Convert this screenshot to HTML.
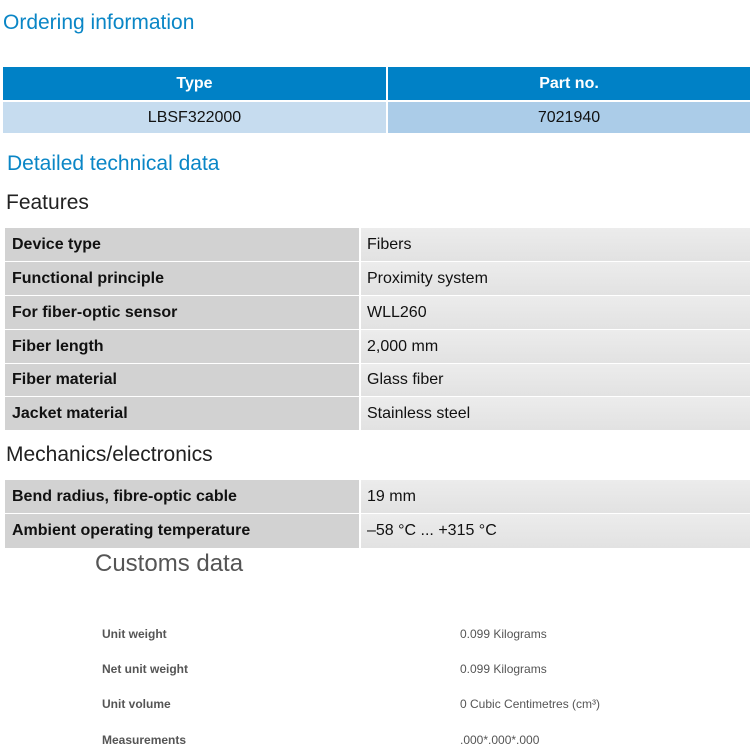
<!DOCTYPE html>
<html><head><meta charset="utf-8"><style>
body{margin:0;width:750px;height:750px;background:#fff;position:relative;overflow:hidden;font-family:"Liberation Sans",sans-serif}
.a{position:absolute;white-space:nowrap}
.h{color:#0a86c6;font-size:21px}
.k{color:#222;font-size:21px}
.c{position:absolute;display:flex;align-items:center;font-size:16px;color:#111}
.l{left:5px;width:354px;background:#d2d2d2;font-weight:bold;padding-left:7px;box-sizing:border-box}
.r{left:361px;width:389px;background:linear-gradient(#ececec,#e2e2e2);padding-left:6px;box-sizing:border-box}
.cl{position:absolute;left:102px;font-size:12px;font-weight:bold;color:#555}
.cv{position:absolute;left:460px;font-size:12px;color:#555}
</style></head><body>
<div class="a h" style="left:3px;top:11px">Ordering information</div>
<div class="c" style="left:3px;top:67px;width:383px;height:33px;background:#0081c6;color:#fff;font-weight:bold;justify-content:center">Type</div>
<div class="c" style="left:388px;top:67px;width:362px;height:33px;background:#0081c6;color:#fff;font-weight:bold;justify-content:center">Part no.</div>
<div class="c" style="left:3px;top:102px;width:383px;height:31px;background:#c6dcef;justify-content:center">LBSF322000</div>
<div class="c" style="left:388px;top:102px;width:362px;height:31px;background:#abcce8;justify-content:center">7021940</div>
<div class="a h" style="left:7px;top:152px">Detailed technical data</div>
<div class="a k" style="left:6px;top:191px">Features</div>

<div class="c l" style="top:228px;height:33px">Device type</div><div class="c r" style="top:228px;height:33px">Fibers</div>
<div class="c l" style="top:262px;height:33px">Functional principle</div><div class="c r" style="top:262px;height:33px">Proximity system</div>
<div class="c l" style="top:296px;height:33px">For fiber-optic sensor</div><div class="c r" style="top:296px;height:33px">WLL260</div>
<div class="c l" style="top:330px;height:33px">Fiber length</div><div class="c r" style="top:330px;height:33px">2,000 mm</div>
<div class="c l" style="top:364px;height:32px">Fiber material</div><div class="c r" style="top:364px;height:32px">Glass fiber</div>
<div class="c l" style="top:397px;height:33px">Jacket material</div><div class="c r" style="top:397px;height:33px">Stainless steel</div>

<div class="a k" style="left:6px;top:443px">Mechanics/electronics</div>
<div class="c l" style="top:480px;height:33px">Bend radius, fibre-optic cable</div><div class="c r" style="top:480px;height:33px">19 mm</div>
<div class="c l" style="top:514px;height:34px">Ambient operating temperature</div><div class="c r" style="top:514px;height:34px">–58 °C ... +315 °C</div>

<div class="a" style="left:95px;top:550px;font-size:24px;color:#555">Customs data</div>
<div class="cl" style="top:627px">Unit weight</div><div class="cv" style="top:627px">0.099 Kilograms</div>
<div class="cl" style="top:662px">Net unit weight</div><div class="cv" style="top:662px">0.099 Kilograms</div>
<div class="cl" style="top:697px">Unit volume</div><div class="cv" style="top:697px">0 Cubic Centimetres (cm³)</div>
<div class="cl" style="top:733px">Measurements</div><div class="cv" style="top:733px">.000*.000*.000</div>
</body></html>
